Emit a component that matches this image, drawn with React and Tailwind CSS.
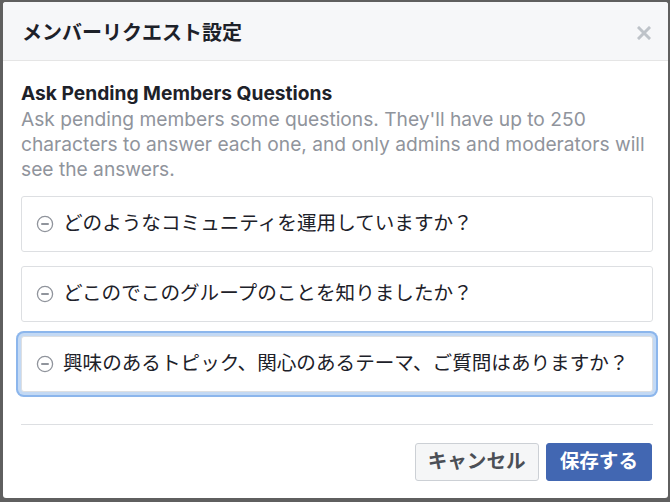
import React from "react";

const questions = [
    "どのようなコミュニティを運用していますか？",
    "どこのでこのグループのことを知りましたか？",
    "興味のあるトピック、関心のあるテーマ、ご質問はありますか？",
];

const FONT = { fontFamily: "Inter, 'Noto Sans CJK JP', sans-serif" };

function MinusCircle() {
    return (
        <svg width="18" height="18" viewBox="0 0 18 18" className="shrink-0">
            <circle cx="9" cy="9" r="7.6" fill="none" stroke="#90949c" strokeWidth="1.3" />
            <rect x="5" y="8" width="8" height="2" rx="1" fill="#90949c" />
        </svg>
    );
}

function QuestionRow({ text, focused }) {
    return (
        <div
            className={`flex items-center gap-[9px] h-[56px] pl-[14px] pr-3 bg-white border border-[#dddfe2] rounded-[3px] ${
                focused ? "shadow-[0_0_0_3px_#c3d9f4,0_0_0_5px_#8cb6ec]" : ""
            }`}
        >
            <MinusCircle />
            <span className="text-[19.6px] text-[#1d2129] leading-none">{text}</span>
        </div>
    );
}

export default function App() {
    return (
        <div className="h-[502px] w-[670px] bg-[#5f5f5f] pt-[2px] pl-[3px] pr-[2px] pb-[4px]" style={FONT}>
            <div className="h-full bg-white rounded-[3px] overflow-hidden flex flex-col">
                {/* Header */}
                <div className="h-[59px] shrink-0 bg-[#f6f7f9] border-b border-[#e5e5e5] flex items-center justify-between pl-[19px] pr-[17px] pt-[3px]">
                    <h1 className="text-[20px] font-bold text-[#1d2129] leading-none">メンバーリクエスト設定</h1>
                    <svg width="14" height="14" viewBox="0 0 14 14">
                        <path d="M2 2 L12 12 M12 2 L2 12" stroke="#bec3c9" strokeWidth="3" strokeLinecap="square" />
                    </svg>
                </div>

                {/* Body */}
                <div className="pl-[18px] pr-[15px] pt-[20px]">
                    <div className="text-[19.2px] font-bold text-[#1d2129] leading-[24px]">Ask Pending Members Questions</div>
                    <p className="pt-[2px] text-[19.2px] text-[#90949c] leading-[25px]">
                        Ask pending members some questions. They'll have up to 250 characters to answer each one, and only admins and moderators will see the answers.
                    </p>

                    <div className="mt-[14px] flex flex-col gap-[14px]">
                        {questions.map((q, i) => (
                            <QuestionRow key={q} text={q} focused={i === 2} />
                        ))}
                    </div>

                    <div className="mt-[32px] border-t border-[#dddfe2]" />

                    {/* Footer buttons */}
                    <div className="mt-[18px] flex justify-end gap-[7px] pr-px">
                        <button className="h-[38px] px-[12px] rounded-[3px] bg-[#f5f6f7] border border-[#ccd0d5] text-[#4b4f56] text-[19.6px] font-bold leading-none">
                            キャンセル
                        </button>
                        <button className="h-[38px] px-[13px] rounded-[3px] bg-[#4267b2] border border-[#4267b2] text-white text-[19.6px] font-bold leading-none">
                            保存する
                        </button>
                    </div>
                </div>
            </div>
        </div>
    );
}
